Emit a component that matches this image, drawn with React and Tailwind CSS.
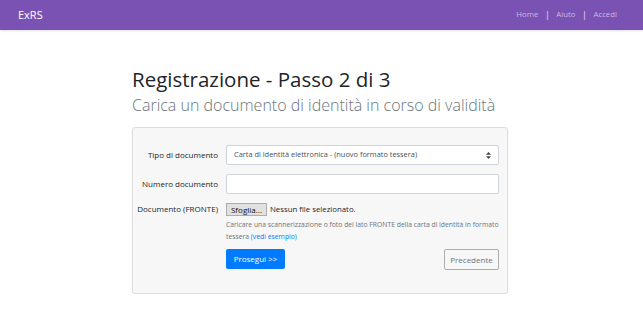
import React from 'react';

const font = { fontFamily: '"Open Sans", "Noto Sans", sans-serif' };

const Navbar = () => (
    <div className="h-[30px] bg-[#7952b3] flex items-center justify-between pl-[18px] pr-[26px] shadow-[0_1px_2px_rgba(0,0,0,0.12)]">
        <span className="text-white text-[11px]">ExRS</span>
        <div className="flex items-center text-[7.8px] text-white/60">
            <span>Home</span>
            <span className="mx-[6.5px] text-white/80 text-[9px]">|</span>
            <span>Aiuto</span>
            <span className="mx-[6.5px] text-white/80 text-[9px]">|</span>
            <span>Accedi</span>
        </div>
    </div>
);

const Row = ({ label, children, align = 'items-center' }) => (
    <div className={`flex ${align}`}>
        <div className="w-[89px] text-right pr-[8px] text-[8px] text-[#212529] shrink-0 whitespace-nowrap">{label}</div>
        <div className="flex-1">{children}</div>
    </div>
);

export default function App() {
    return (
        <div className="min-h-[318px] bg-white" style={font}>
            <Navbar />
            <div className="w-[376px] ml-[132px] pt-[36px]">
                <h1 className="text-[20.5px] leading-[26px] text-[#212529]">Registrazione - Passo 2 di 3</h1>
                <h2 className="text-[16px] leading-[22px] text-[#6c757d] font-light mt-[2px]">Carica un documento di identità in corso di validità</h2>
                <div className="mt-[11px] bg-[#f7f7f7] border border-[#dcdcdc] rounded-[3px] h-[167px] pl-[4px] pr-[8px] pt-[17px]">
                    <div className="flex flex-col gap-[9px]">
                        <Row label="Tipo di documento">
                            <div className="h-[20px] bg-white border border-[#ced4da] rounded-[2px] flex items-center justify-between px-[7px] text-[7.4px] text-[#495057]">
                                <span>Carta di identità elettronica - (nuovo formato tessera)</span>
                                <svg width="5" height="7" viewBox="0 0 5 7"><path d="M2.5 0 L5 2.8 H0 Z M2.5 7 L5 4.2 H0 Z" fill="#444" /></svg>
                            </div>
                        </Row>
                        <Row label="Numero documento">
                            <div className="h-[20px] bg-white border border-[#ced4da] rounded-[2px]" />
                        </Row>
                        <Row label="Documento (FRONTE)" align="items-start">
                            <div className="flex items-center gap-[3px]">
                                <span className="h-[13px] w-[41px] text-center bg-[#e1e1e1] border border-[#adadad] text-[8px] leading-[11px] text-[#111]">Sfoglia...</span>
                                <span className="text-[7.8px] text-[#212529]">Nessun file selezionato.</span>
                            </div>
                            <p className="mt-[3px] text-[6.8px] leading-[12px] text-[#6c757d]">
                                Caricare una scannerizzazione o foto del lato FRONTE della carta di identità in formato tessera <a className="text-[#007bff]">(vedi esempio)</a>
                            </p>
                        </Row>
                    </div>
                    <div className="flex justify-between mt-[6px] ml-[89px]">
                        <button className="h-[20px] w-[59px] bg-[#007bff] text-white text-[8px] rounded-[2px]">Prosegui &gt;&gt;</button>
                        <button className="h-[21px] w-[55px] bg-[#f7f7f7] border border-[#adadad] text-[#6c757d] text-[8px] rounded-[2px]">Precedente</button>
                    </div>
                </div>
            </div>
        </div>
    );
}
